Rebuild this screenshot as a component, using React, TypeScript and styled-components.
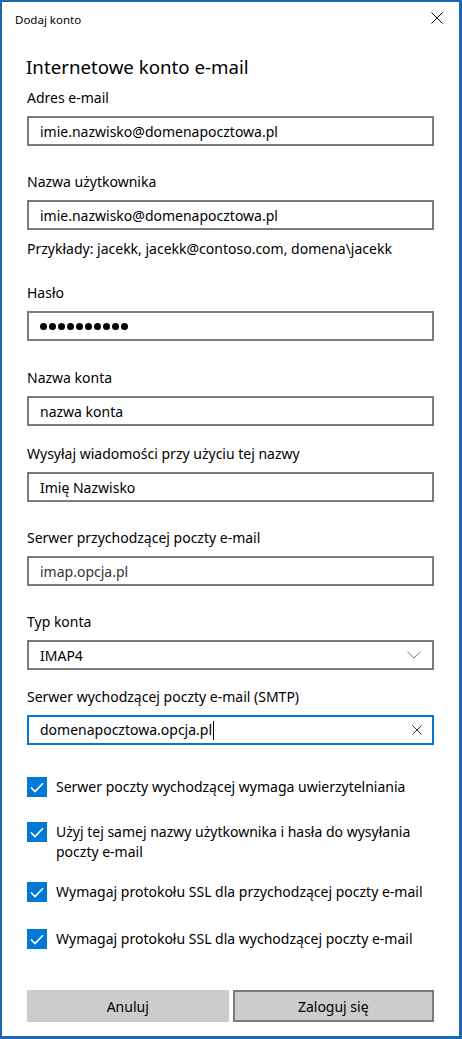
import React from "react";
import styled, { createGlobalStyle } from "styled-components";

const GlobalStyle = createGlobalStyle`
  html, body {
    margin: 0;
    padding: 0;
    background: #ffffff;
  }
  * {
    box-sizing: border-box;
  }
  body {
    font-family: "Segoe UI", "Noto Sans", "Open Sans", sans-serif;
    color: #000000;
  }
`;

const Window = styled.div`
  width: 462px;
  height: 1039px;
  border: 2px solid #1c68b3;
  border-bottom-width: 3px;
  border-right-width: 3px;
  background: #ffffff;
  display: flex;
  flex-direction: column;
`;

const TitleBar = styled.div`
  height: 34px;
  display: flex;
  align-items: center;
  justify-content: space-between;
  padding: 0 15px 0 13px;
  font-size: 11.5px;
`;

const CloseButton = styled.div`
  width: 14px;
  height: 14px;
  margin-top: -2px;
  display: flex;
  align-items: center;
  justify-content: center;
`;

const Body = styled.div`
  padding: 0 25px 0 25px;
  display: flex;
  flex-direction: column;
`;

const Heading = styled.h1`
  margin: 17px 0 0 -1px;
  font-size: 18.7px;
  line-height: 28px;
  font-weight: 400;
`;

const Field = styled.div<{ $space: number }>`
  margin-top: ${(p) => p.$space}px;
  display: flex;
  flex-direction: column;
`;

const Label = styled.div`
  font-size: 14px;
  line-height: 20px;
`;

const Box = styled.div<{ $focused?: boolean; $muted?: boolean }>`
  margin-top: 8px;
  height: 30px;
  border: 2px solid ${(p) => (p.$focused ? "#0078d7" : "#7a7a7a")};
  display: flex;
  align-items: center;
  justify-content: space-between;
  padding: 0 9px 0 11px;
  font-size: 14px;
  color: ${(p) => (p.$muted ? "#333333" : "#000000")};
`;

const Hint = styled.div`
  margin-top: 9px;
  font-size: 14px;
  line-height: 20px;
`;

const Dots = styled.div`
  display: flex;
  gap: 2px;
`;

const Dot = styled.span`
  width: 7px;
  height: 7px;
  border-radius: 50%;
  background: #000000;
`;

const Caret = styled.span`
  display: inline-block;
  width: 1px;
  height: 19px;
  background: #000000;
  vertical-align: middle;
  margin-left: 1px;
`;

const CheckRow = styled.div<{ $space: number }>`
  margin-top: ${(p) => p.$space}px;
  display: flex;
  align-items: flex-start;
  gap: 9px;
  font-size: 14px;
  line-height: 20px;
`;

const CheckBox = styled.div`
  flex: none;
  width: 20px;
  height: 20px;
  background: #0078d7;
  display: flex;
  align-items: center;
  justify-content: center;
`;

const Buttons = styled.div`
  margin-top: 41px;
  display: grid;
  grid-template-columns: 1fr 1fr;
  gap: 4px;
`;

const Button = styled.div<{ $primary?: boolean }>`
  height: 32px;
  background: #cccccc;
  border: 2px solid ${(p) => (p.$primary ? "#7a7a7a" : "#cccccc")};
  display: flex;
  align-items: center;
  justify-content: center;
  font-size: 14px;
`;

const Check = () => (
  <svg width="14" height="11" viewBox="0 0 14 11">
    <path d="M1 5.5 L5 9.5 L13 1.2" fill="none" stroke="#ffffff" strokeWidth="1.6" />
  </svg>
);

const CheckItem: React.FC<{ space: number; children: React.ReactNode }> = ({ space, children }) => (
  <CheckRow $space={space}>
    <CheckBox>
      <Check />
    </CheckBox>
    <div>{children}</div>
  </CheckRow>
);

export default function App() {
  return (
    <>
      <GlobalStyle />
      <Window>
        <TitleBar>
          <span>Dodaj konto</span>
          <CloseButton>
            <svg width="12" height="12" viewBox="0 0 12 12">
              <path d="M0.5 0.5 L11.5 11.5 M11.5 0.5 L0.5 11.5" stroke="#000" strokeWidth="1" />
            </svg>
          </CloseButton>
        </TitleBar>
        <Body>
          <Heading>Internetowe konto e-mail</Heading>

          <Field $space={7}>
            <Label>Adres e-mail</Label>
            <Box>imie.nazwisko@domenapocztowa.pl</Box>
          </Field>

          <Field $space={26}>
            <Label>Nazwa użytkownika</Label>
            <Box>imie.nazwisko@domenapocztowa.pl</Box>
          </Field>
          <Hint>Przykłady: jacekk, jacekk@contoso.com, domena\jacekk</Hint>

          <Field $space={24}>
            <Label>Hasło</Label>
            <Box>
              <Dots>
                {Array.from({ length: 10 }).map((_, i) => (
                  <Dot key={i} />
                ))}
              </Dots>
            </Box>
          </Field>

          <Field $space={27}>
            <Label>Nazwa konta</Label>
            <Box>nazwa konta</Box>
          </Field>

          <Field $space={18}>
            <Label>Wysyłaj wiadomości przy użyciu tej nazwy</Label>
            <Box>Imię Nazwisko</Box>
          </Field>

          <Field $space={26}>
            <Label>Serwer przychodzącej poczty e-mail</Label>
            <Box $muted>imap.opcja.pl</Box>
          </Field>

          <Field $space={26}>
            <Label>Typ konta</Label>
            <Box>
              <span>IMAP4</span>
              <svg width="14" height="8" viewBox="0 0 14 8" style={{ marginRight: 2 }}>
                <path d="M0.5 0.8 L7 7 L13.5 0.8" fill="none" stroke="#777" strokeWidth="1" />
              </svg>
            </Box>
          </Field>

          <Field $space={17}>
            <Label>Serwer wychodzącej poczty e-mail (SMTP)</Label>
            <Box $focused>
              <span>
                domenapocztowa.opcja.pl
                <Caret />
              </span>
              <svg width="10" height="10" viewBox="0 0 10 10" style={{ marginRight: 1 }}>
                <path d="M0.5 0.5 L9.5 9.5 M9.5 0.5 L0.5 9.5" stroke="#333" strokeWidth="1" />
              </svg>
            </Box>
          </Field>

          <CheckItem space={32}>Serwer poczty wychodzącej wymaga uwierzytelniania</CheckItem>
          <CheckItem space={25}>
            Użyj tej samej nazwy użytkownika i hasła do wysyłania
            <br />
            poczty e-mail
          </CheckItem>
          <CheckItem space={20}>Wymagaj protokołu SSL dla przychodzącej poczty e-mail</CheckItem>
          <CheckItem space={27}>Wymagaj protokołu SSL dla wychodzącej poczty e-mail</CheckItem>

          <Buttons>
            <Button>Anuluj</Button>
            <Button $primary>Zaloguj się</Button>
          </Buttons>
        </Body>
      </Window>
    </>
  );
}
